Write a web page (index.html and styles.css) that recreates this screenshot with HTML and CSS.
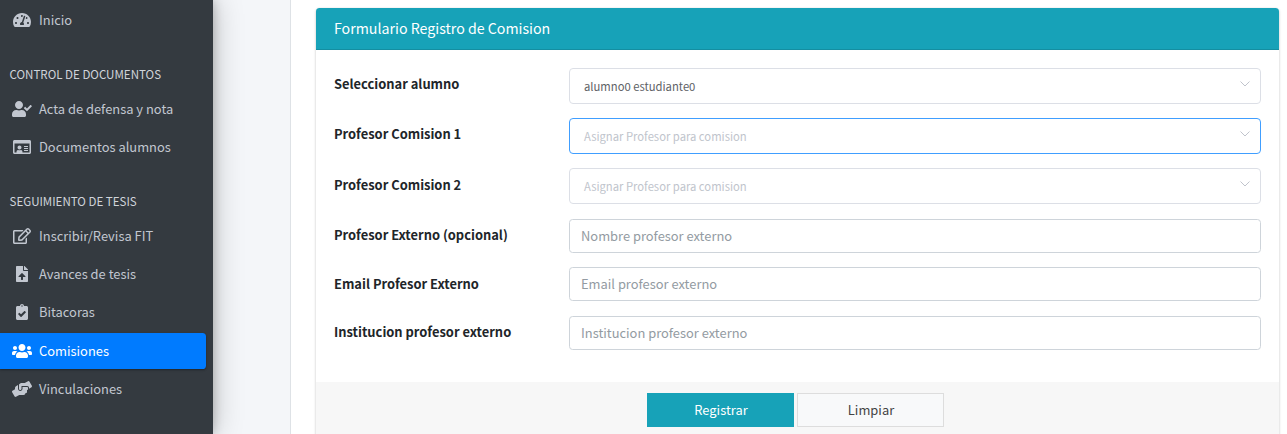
FILE: index.html
```html
<!DOCTYPE html>
<html lang="es">
<head>
<meta charset="utf-8">
<title>Registro de Comision</title>
<link rel="stylesheet" href="styles.css">
</head>
<body>
<div class="app">
  <aside class="sidebar">
    <nav class="nav">
      <a class="nav-link"><span class="nav-icon"><svg viewBox="0 0 576 512"><path d="M288 32C129 32 0 161 0 320c0 53 14 102 39 145 6 10 16 15 27 15h444c11 0 21-5 27-15 25-43 39-92 39-145C576 161 447 32 288 32zm0 64c15 0 27 10 31 23l-9 28c-6 7-13 13-22 13-18 0-32-14-32-32s14-32 32-32zM96 384c-18 0-32-14-32-32s14-32 32-32 32 14 32 32-14 32-32 32zm48-160c-18 0-32-14-32-32s14-32 32-32 32 14 32 32-14 32-32 32zm247-73l-62 184c14 12 23 29 23 49 0 12-3 23-9 32H233c-6-9-9-20-9-32 0-34 27-62 60-64l61-184c4-13 18-20 31-15 12 4 19 17 15 30zm15 59l15-46c3-1 7-2 11-2 18 0 32 14 32 32s-14 32-32 32c-11 0-20-7-26-16zm74 174c-18 0-32-14-32-32s14-32 32-32 32 14 32 32-14 32-32 32z"/></svg></span><span>Inicio</span></a>
      <h6 class="nav-header">CONTROL DE DOCUMENTOS</h6>
      <a class="nav-link"><span class="nav-icon"><svg viewBox="0 0 640 512"><path d="M224 256c71 0 128-57 128-128S295 0 224 0 96 57 96 128s57 128 128 128zm90 32h-17c-22 10-47 16-73 16s-50-6-73-16h-17C60 288 0 348 0 422v42c0 27 22 48 48 48h352c27 0 48-21 48-48v-42c0-74-60-134-134-134zM633 159l-28-28c-5-5-13-5-18 0L479 238l-47-47c-5-5-13-5-18 0l-28 28c-5 5-5 13 0 18l83 84c5 5 13 5 18 0l145-144c5-5 5-13 1-18z"/></svg></span><span>Acta de defensa y nota</span></a>
      <a class="nav-link"><span class="nav-icon"><svg viewBox="0 0 576 512"><path d="M528 32H48C22 32 0 54 0 80v352c0 27 22 48 48 48h480c27 0 48-21 48-48V80c0-26-21-48-48-48zm0 400H304c0-39-9-74-51-80-10-2-20 8-45 8s-35-10-45-8c-42 6-51 41-51 80H48V144h480v288zM208 336c35 0 64-29 64-64s-29-64-64-64-64 29-64 64 29 64 64 64zm152 48h112c4 0 8-4 8-8v-16c0-4-4-8-8-8H360c-4 0-8 4-8 8v16c0 4 4 8 8 8zm0-64h112c4 0 8-4 8-8v-16c0-4-4-8-8-8H360c-4 0-8 4-8 8v16c0 4 4 8 8 8zm0-64h112c4 0 8-4 8-8v-16c0-4-4-8-8-8H360c-4 0-8 4-8 8v16c0 4 4 8 8 8z"/></svg></span><span>Documentos alumnos</span></a>
      <h6 class="nav-header">SEGUIMIENTO DE TESIS</h6>
      <a class="nav-link"><span class="nav-icon"><svg viewBox="0 0 576 512"><path d="M402.300 344.900l32-32c5-5 13.700-1.500 13.700 5.700V464c0 26.500-21.500 48-48 48H48c-26.500 0-48-21.500-48-48V112c0-26.500 21.500-48 48-48h273.500c7.100 0 10.700 8.600 5.700 13.700l-32 32c-1.500 1.500-3.500 2.300-5.700 2.300H48v352h352V350.500c0-2.100.8-4.100 2.300-5.600zm156.600-201.800L296.300 405.700l-90.400 10c-26.200 2.900-48.500-19.200-45.600-45.600l10-90.400L432.900 17.100c22.900-22.900 59.900-22.900 82.700 0l43.200 43.200c22.900 22.900 22.900 60 .1 82.800zM460.100 174L402 115.900 216.200 301.800l-7.300 65.300 65.300-7.300L460.100 174zm64.800-79.700l-43.200-43.200c-4.100-4.100-10.800-4.100-14.800 0L436 82l58.100 58.100 30.900-30.900c4-4.200 4-10.800-.1-14.900z"/></svg></span><span>Inscribir/Revisa FIT</span></a>
      <a class="nav-link"><span class="nav-icon"><svg viewBox="0 0 384 512"><path d="M224 136V0H24C10.700 0 0 10.700 0 24v464c0 13.300 10.700 24 24 24h336c13.300 0 24-10.700 24-24V160H248c-13.200 0-24-10.800-24-24zm65.200 216H224v80c0 8.800-7.200 16-16 16h-32c-8.800 0-16-7.200-16-16v-80H94.800c-14.300 0-21.400-17.300-11.300-27.400l96.400-95.700c6.700-6.600 17.400-6.600 24 0l96.400 95.700c10.200 10.100 3.100 27.400-11.100 27.400zM377 105L279.100 7c-4.500-4.500-10.600-7-17-7H256v128h128v-6.100c0-6.300-2.500-12.400-7-16.900z"/></svg></span><span>Avances de tesis</span></a>
      <a class="nav-link"><span class="nav-icon"><svg viewBox="0 0 384 512"><path d="M336 64h-80c0-35.300-28.700-64-64-64s-64 28.700-64 64H48C21.500 64 0 85.500 0 112v352c0 26.500 21.500 48 48 48h288c26.500 0 48-21.500 48-48V112c0-26.500-21.500-48-48-48zM192 40c13.300 0 24 10.700 24 24s-10.700 24-24 24-24-10.700-24-24 10.700-24 24-24zm121.200 231.800l-143 141.800c-4.700 4.700-12.300 4.600-17-.1l-82.600-83.300c-4.700-4.700-4.600-12.300.1-17L99.100 285c4.700-4.700 12.300-4.600 17 .1l46 46.400 106-105.200c4.700-4.700 12.300-4.600 17 .1l28.200 28.400c4.700 4.800 4.600 12.300-.1 17z"/></svg></span><span>Bitacoras</span></a>
      <a class="nav-link active"><span class="nav-icon"><svg viewBox="0 0 640 512"><path d="M96 224c35.300 0 64-28.700 64-64s-28.700-64-64-64-64 28.700-64 64 28.700 64 64 64zm448 0c35.300 0 64-28.700 64-64s-28.700-64-64-64-64 28.700-64 64 28.700 64 64 64zm32 32h-64c-17.600 0-33.500 7.100-45.100 18.600 40.300 22.100 68.900 62 75.100 109.400h66c17.700 0 32-14.300 32-32v-32c0-35.300-28.700-64-64-64zm-256 0c61.900 0 112-50.100 112-112S381.900 32 320 32 208 82.100 208 144s50.100 112 112 112zm76.800 32h-8.300c-20.800 10-43.900 16-68.500 16s-47.600-6-68.500-16h-8.300C179.600 288 128 339.600 128 403.200V432c0 26.500 21.500 48 48 48h288c26.500 0 48-21.500 48-48v-28.800c0-63.600-51.600-115.200-115.200-115.200zm-223.700-13.400C161.500 263.100 145.600 256 128 256H64c-35.300 0-64 28.700-64 64v32c0 17.700 14.300 32 32 32h65.900c6.300-47.400 34.900-87.300 75.200-109.400z"/></svg></span><span>Comisiones</span></a>
      <a class="nav-link"><span class="nav-icon"><svg viewBox="0 0 640 512"><path d="M488 192H336v56c0 39.700-32.300 72-72 72s-72-32.300-72-72V126.400l-64.900 39C107.800 176.900 96 197.800 96 220.200v47.300l-80 46.200C.7 322.500-4.600 342.100 4.300 357.400l80 138.600c8.800 15.300 28.400 20.500 43.700 11.700L231.400 448H368c35.300 0 64-28.700 64-64h16c17.700 0 32-14.300 32-32v-64h8c13.300 0 24-10.700 24-24v-48c0-13.300-10.700-24-24-24zm147.700-37.400L555.700 16C546.900.7 527.300-4.500 512 4.300L408.600 64H306.400c-12 0-23.700 3.400-33.900 9.700L239 94.600c-9.400 5.800-15 16.100-15 27.100V248c0 22.100 17.900 40 40 40s40-17.900 40-40v-88h184c30.900 0 56 25.100 56 56v28.500l80-46.200c15.300-8.900 20.500-28.400 11.700-43.700z"/></svg></span><span>Vinculaciones</span></a>
    </nav>
  </aside>
  <main class="content">
    <section class="panel">
      <form class="card">
        <header class="card-header">Formulario Registro de Comision</header>
        <div class="card-body">
          <div class="row select-row"><label>Seleccionar alumno</label><div class="select filled"><span>alumno0 estudiante0</span><svg class="caret" viewBox="0 0 10 6"><path d="M.5.5 5 5 9.500.5"/></svg></div></div>
          <div class="row select-row"><label>Profesor Comision 1</label><div class="select focused"><span>Asignar Profesor para comision</span><svg class="caret" viewBox="0 0 10 6"><path d="M.5.5 5 5 9.500.5"/></svg></div></div>
          <div class="row select-row last-select"><label>Profesor Comision 2</label><div class="select"><span>Asignar Profesor para comision</span><svg class="caret" viewBox="0 0 10 6"><path d="M.5.5 5 5 9.500.5"/></svg></div></div>
          <div class="row"><label>Profesor Externo (opcional)</label><input class="input" placeholder="Nombre profesor externo"></div>
          <div class="row"><label>Email Profesor Externo</label><input class="input" placeholder="Email profesor externo"></div>
          <div class="row"><label>Institucion profesor externo</label><input class="input" placeholder="Institucion profesor externo"></div>
        </div>
        <footer class="card-footer">
          <button type="button" class="btn btn-info">Registrar</button>
          <button type="button" class="btn btn-light">Limpiar</button>
        </footer>
      </form>
    </section>
  </main>
</div>
</body>
</html>
```
FILE: styles.css
```css
* { box-sizing: border-box; }
body {
  margin: 0;
  height: 434px;
  overflow: hidden;
  background: #f4f6f9;
  color: #212529;
  font-family: "Source Sans Pro", "Noto Sans CJK SC", "Noto Sans", sans-serif;
  font-size: 12.900px;
  line-height: 22px;
}
.app { display: flex; height: 434px; }
.sidebar {
  flex: 0 0 213px;
  background: #343a40;
  box-shadow: 0 0 28px rgba(0,0,0,.25), 0 0 10px rgba(0,0,0,.22);
}
.nav { padding: 2px 7px 0 0; display: flex; flex-direction: column; gap: 2.250px; }
.nav-link {
  display: flex;
  align-items: center;
  height: 36px;
  padding-left: 10px;
  color: #c2c7d0;
  border-radius: 0 3.600px 3.600px 0;
}
.nav-icon { width: 24px; margin-right: 5px; display: flex; justify-content: center; }
.nav-icon svg { height: 16px; fill: currentColor; display: block; flex: none; }
.nav-link.active {
  background: #007bff;
  color: #fff;
  box-shadow: 0 1px 3px rgba(0,0,0,.12), 0 1px 2px rgba(0,0,0,.24);
}
.nav-header {
  margin: 0;
  height: 48.300px;
  padding: 24px 0 0 9.500px;
  font-size: 11.550px;
  font-weight: 400;
  line-height: 20px;
  color: #d0d4db;
}
.content { flex: 1; padding-left: 77px; }
.panel {
  height: 434px;
  padding: 8px 8px 0 25px;
  background: #fff;
  border-left: 1px solid #dee2e6;
  position: relative;
}
.card {
  height: 440px;
  border-radius: 3.600px;
  box-shadow: 0 0 1px rgba(0,0,0,.125), 0 1px 3px rgba(0,0,0,.2);
  overflow: hidden;
}
.card-header {
  height: 42px;
  padding: 9px 18px;
  background: #17a2b8;
  border-bottom: 1px solid #148ea1;
  color: #fff;
  font-size: 14.200px;
  line-height: 22px;
}
.card-body { height: 332px; padding: 18px 18px 0; }
.row { display: grid; grid-template-columns: 235px 1fr; margin-bottom: 15px; }
.row:nth-child(4) { margin-bottom: 14px; }
.row label { font-weight: 700; padding-top: 5px; }
.row:nth-child(3) label,
.row:nth-child(5) label { padding-top: 6px; }
.select-row { margin-bottom: 14px; }
.last-select { margin-bottom: 15px; }
.select {
  display: flex;
  align-items: center;
  justify-content: space-between;
  height: 36px;
  padding: 0 10px 0 14px;
  border: 1px solid #dcdfe6;
  border-radius: 4px;
  color: #c0c4cc;
  font-size: 11.250px;
}
.select span { padding-bottom: 1px; }
.filled span { color: #606266; }
.focused { border-color: #409eff; }
.caret { width: 10px; height: 6px; margin-top: -4px; fill: none; stroke: #c0c4cc; }
.input {
  width: 100%;
  height: 34px;
  padding: 0 11px 2px;
  border: 1px solid #ced4da;
  border-radius: 3.600px;
  background: #fff;
  font: inherit;
}
.input::placeholder { color: #939ba2; opacity: 1; }
.card-footer {
  display: flex;
  justify-content: center;
  gap: 3px;
  height: 66px;
  padding: 11px 4px 0 0;
  background: #f7f7f7;
}
.btn {
  width: 147px;
  height: 34px;
  padding: 0 0 0 1px;
  border: 1px solid #17a2b8;
  background: #17a2b8;
  color: #fff;
  font: inherit;
}
.btn-light { background: #f8f9fa; border-color: #ddd; color: #444; }
```
